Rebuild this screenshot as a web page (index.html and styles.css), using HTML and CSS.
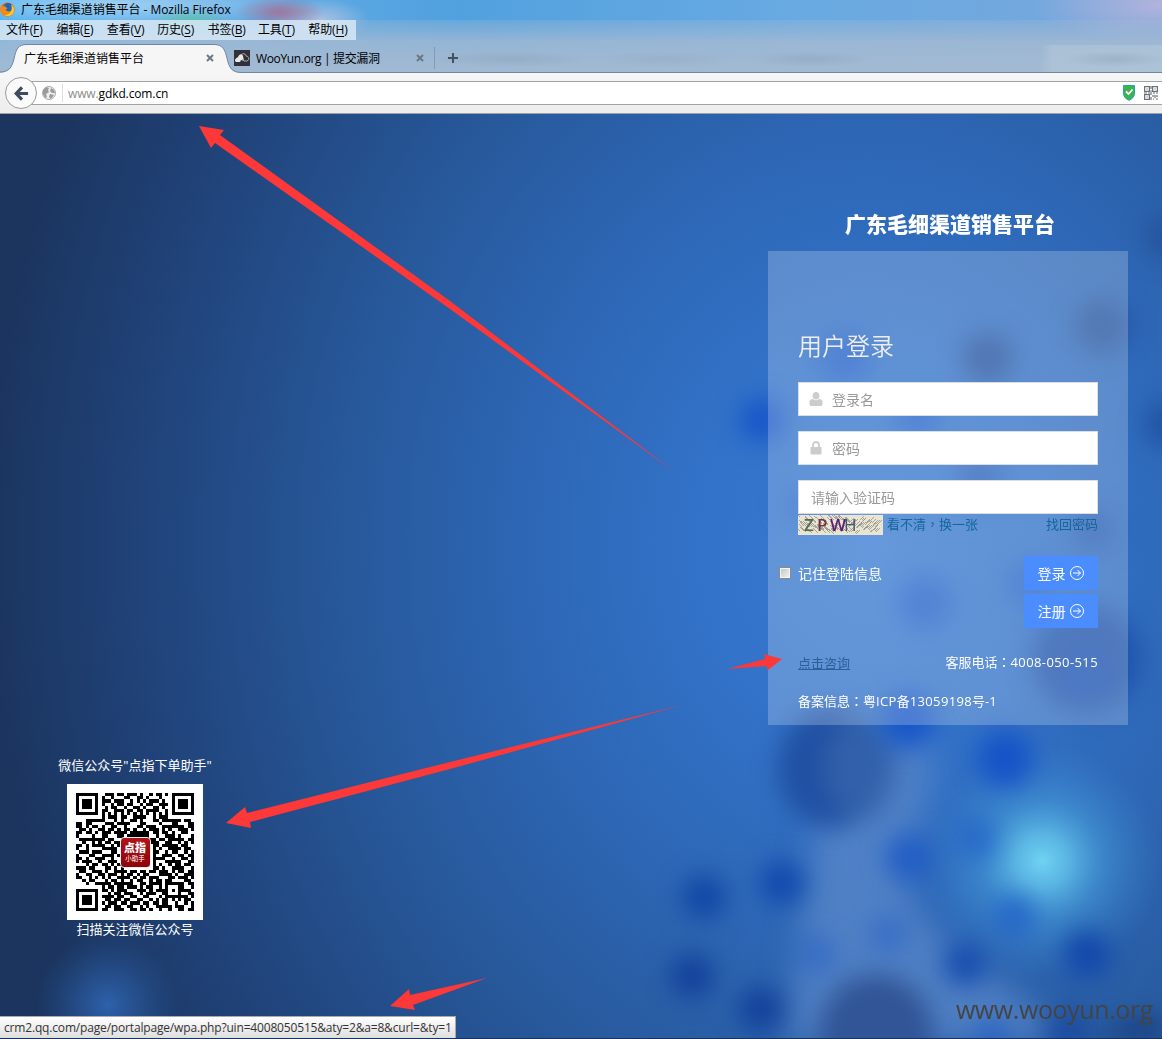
FILE: index.html
```html
<!DOCTYPE html>
<html lang="zh-CN">
<head>
<meta charset="utf-8">
<title>广东毛细渠道销售平台</title>
<link rel="stylesheet" href="styles.css">
</head>
<body>
<div class="window">
  <header class="chrome">
    <div class="titlebar">
      <svg class="fox" viewBox="0 0 16 16"><circle cx="8" cy="8" r="7.5" fill="#e66a12"/><circle cx="8.6" cy="6.2" r="5" fill="#2465b3"/><path d="M1 4C3 5 4 4 6 5L8 7L6 8C7 10 10 11 12 9C14 7 13 4 12 3C15 4 16 8 15 11C13 16 6 17 2 13C0 10 0 7 1 4Z" fill="#f08a1c"/><path d="M12 3C15 5 16 9 14 12C12 15 8 16 5 14C10 14 14 10 12 3Z" fill="#fbc82d"/></svg>
      <span class="wtitle">广东毛细渠道销售平台 - Mozilla Firefox</span>
    </div>
    <nav class="menubar">
      <span>文件(<u>F</u>)</span><span>编辑(<u>E</u>)</span><span>查看(<u>V</u>)</span><span>历史(<u>S</u>)</span><span>书签(<u>B</u>)</span><span>工具(<u>T</u>)</span><span>帮助(<u>H</u>)</span>
    </nav>
    <div class="tabs">
      <svg class="tabshape" viewBox="0 0 244 30"><path d="M0 29.5C10 29.5 12 24 14 16C16 6 18 1.5 27 1.5H214C223 1.5 225 7 227 15C229 24 231 29.500 240 29.500V30H0Z" fill="#f6f6f6"/><path d="M0 29C9 29 12 24 14 16C16 6 18 1.500 27 1.500H214C223 1.500 225 7 227 15C229 24 231 29.500 242 29.500" fill="none" stroke="#6d86a6"/></svg>
      <div class="tab tab-active"><span>广东毛细渠道销售平台</span><svg class="close" viewBox="0 0 8 8"><path d="M1 1L7 7M7 1L1 7"/></svg></div>
      <div class="tab tab-second">
        <svg class="favicon" viewBox="0 0 16 16"><rect width="16" height="16" fill="#30313b"/><path d="M1 11C1 8 3 8 4 7C5 4 8 3 9 6L10 11L7 10L6 12H2Z" fill="#e8e8e8"/><path d="M8 4C11 3 12 5 12 6C15 6 16 10 13 11H10L8 9" fill="none" stroke="#aaa"/></svg>
        <span class="tab-label">WooYun.org | 提交漏洞</span><svg class="close" viewBox="0 0 8 8"><path d="M1 1L7 7M7 1L1 7"/></svg>
      </div>
      <svg class="plus" viewBox="0 0 10 10"><path d="M5 0V10M0 5H10"/></svg>
    </div>
    <div class="navbar">
      <div class="back"><svg viewBox="0 0 16 16"><path d="M8.500 1.500L2.300 8L8.500 14.500M3 8H15" fill="none" stroke="#404c5c" stroke-width="3.400"/></svg></div>
      <div class="urlbar">
        <svg class="globe" viewBox="0 0 14 14"><circle cx="7" cy="7" r="6.500" fill="#ededed" stroke="#aaa"/><path d="M1 4L4 1L7 2L6 4L7 6L4 8L5 11L3 12L1 8ZM9 2L12 4L13 7L10 7L8 5ZM8 8L12 9L9 13L7 11Z" fill="#9b9b9b"/></svg>
        <span class="url"><i>www.</i>gdkd.com.cn</span>
        <svg class="shield" viewBox="0 0 14 16"><path d="M1.500 .500H12.500V8C12.500 12 10 14 7 15.300C4 14 1.500 12 1.500 8Z" fill="#3fb34b" stroke="#19a7c4"/><path d="M4 6.500L6.500 9L10.500 4.500" fill="none" stroke="#fff" stroke-width="1.800"/></svg>
        <svg class="qricon" viewBox="0 0 14 14" fill="none" stroke="#6b7079" stroke-width="1.200"><rect x=".6" y=".6" width="4.800" height="4.800"/><rect x="8.600" y=".6" width="4.800" height="4.800"/><rect x=".6" y="8.600" width="4.800" height="4.800"/><path d="M2.500 3H3.700M10.500 3H11.700M2.500 11H3.700M7 0V3M6 5H8M0 7H3M4 7H6M7 6V9M9 7H11M12 7H14M9 9V11M7 11V14M11 9V12M13 9V11M9 13H10M12 13H14"/></svg>
      </div>
    </div>
  </header>
  <main class="page">
    <svg class="backdrop" viewBox="0 0 1162 924" preserveAspectRatio="none" color-interpolation-filters="sRGB">
      <defs>
        <filter id="b16" x="-60%" y="-60%" width="220%" height="220%"><feGaussianBlur stdDeviation="16"/></filter>
        <filter id="b10" x="-60%" y="-60%" width="220%" height="220%"><feGaussianBlur stdDeviation="12"/></filter>
        <radialGradient id="cyan"><stop offset="0" stop-color="#70d3f3"/><stop offset=".22" stop-color="#62c2ea" stop-opacity=".85"/><stop offset=".5" stop-color="#4ba6df" stop-opacity=".5"/><stop offset="1" stop-color="#3b86d2" stop-opacity="0"/></radialGradient>
        <radialGradient id="left"><stop offset="0" stop-color="#2d62ac"/><stop offset=".45" stop-color="#2a5a9f" stop-opacity=".6"/><stop offset="1" stop-color="#24508f" stop-opacity="0"/></radialGradient>
      </defs>
      <g filter="url(#b16)"><path d="M915 615C955 650 915 700 905 760C915 830 1010 860 1070 930H785C800 830 805 760 820 690Z" fill="#5886c8" opacity=".8"/></g>
      <circle cx="108" cy="891" r="72" fill="url(#left)"/>
      <circle cx="1042" cy="747" r="120" fill="url(#cyan)"/>
      <g filter="url(#b10)">
        <ellipse cx="832" cy="654" rx="54" ry="60" fill="#2050a2"/>
        <ellipse cx="862" cy="654" rx="38" ry="52" fill="#3a66ae" opacity=".7"/>
        <circle cx="876" cy="918" r="57" fill="#315596"/>
        <circle cx="1086" cy="544" r="54" fill="#1c4da6" opacity=".8"/>
        <circle cx="988" cy="244" r="26" fill="#1f4a94" opacity=".8"/>
        <circle cx="1102" cy="212" r="27" fill="#1f4a92" opacity=".7"/>
        <circle cx="980" cy="366" r="22" fill="#1f50a8" opacity=".6"/>
        <circle cx="1094" cy="416" r="22" fill="#1f50a8" opacity=".6"/>
        <circle cx="1166" cy="123" r="20" fill="#224b91" opacity=".7"/>
        <circle cx="1166" cy="310" r="22" fill="#1e4d9e" opacity=".8"/>
        <path d="M1100 924Q1130 900 1162 906V924Z" fill="#173a79"/>
      </g>
      <g filter="url(#b10)" fill="#1553c8">
        <circle cx="1005" cy="645" r="28"/><circle cx="762" cy="306" r="22" opacity=".95"/>
        <circle cx="845" cy="244" r="25" opacity=".6"/><circle cx="918" cy="302" r="21" opacity=".6"/>
        <circle cx="925" cy="489" r="27" opacity=".6"/><circle cx="908" cy="606" r="27" opacity=".9"/>
        <circle cx="1030" cy="470" r="22" opacity=".5"/><circle cx="800" cy="392" r="18" opacity=".35"/>
        <circle cx="1086" cy="560" r="24" opacity=".35"/>
        <circle cx="782" cy="769" r="22" fill="#1149ae"/><circle cx="704" cy="783" r="22" fill="#1147a5"/>
        <circle cx="692" cy="862" r="22" fill="#12419b"/><circle cx="761" cy="895" r="22" fill="#12419b"/>
        <circle cx="908" cy="743" r="23" opacity=".7"/><circle cx="977" cy="725" r="21" opacity=".5"/>
        <circle cx="818" cy="840" r="18" opacity=".4"/><circle cx="888" cy="820" r="18" opacity=".4"/>
        <circle cx="965" cy="850" r="22" fill="#144aae" opacity=".9"/><circle cx="1087" cy="840" r="23" fill="#1247ab"/>
        <circle cx="1015" cy="801" r="21" opacity=".6"/><circle cx="1066" cy="918" r="22" fill="#17469d" opacity=".8"/><circle cx="992" cy="920" r="18" opacity=".5"/>
      </g>
    </svg>
    <section class="wechat">
      <p class="wx-top">微信公众号"点指下单助手"</p>
      <div class="qr">
        <svg id="qr" viewBox="0 0 37 37" shape-rendering="crispEdges"></svg>
        <div class="qrlogo"><b>点指</b><span>小助手</span></div>
      </div>
      <p class="wx-bottom">扫描关注微信公众号</p>
    </section>
    <section class="login">
      <h1>广东毛细渠道销售平台</h1>
      <form class="panel">
        <h2>用户登录</h2>
        <label class="field"><svg viewBox="0 0 14 14"><ellipse cx="7" cy="3.800" rx="3.400" ry="3.800"/><path d="M.5 12V10C.5 8 2 7 3.700 7Q7 9.600 10.300 7C12 7 13.500 8 13.500 10V12Q13.500 14 12 14H2Q.5 14 .5 12Z"/></svg><span>登录名</span></label>
        <label class="field"><svg viewBox="0 0 14 14"><path d="M2 6H12Q12.500 6 12.500 7V12.500Q12.500 13.500 12 13.500H2Q1.500 13.500 1.500 12.500V7Q1.500 6 2 6Z"/><path d="M4 7V4A3 3 0 0 1 10 4V7" fill="none" stroke="#ccc" stroke-width="1.800"/></svg><span>密码</span></label>
        <label class="field field-code"><span>请输入验证码</span></label>
        <div class="captcha-row">
          <svg class="captcha" viewBox="0 0 85 20"><rect width="85" height="20" fill="#e9e5d2"/><path id="noise" fill="none" stroke="#8e8c86" stroke-width=".7"/><g font-size="17" font-weight="600"><text x="6" y="16" fill="#4f6b50">Z</text><text x="19" y="16" fill="#6d3541">P</text><text x="32" y="16" fill="#5c1d70">W</text><text x="46" y="16" fill="#41566c" font-weight="400">H</text></g></svg>
          <a>看不清<i class="mid" lang="zh-TW">，</i>换一张</a><a class="forgot">找回密码</a>
        </div>
        <div class="actions">
          <label class="remember"><i class="box"></i>记住登陆信息</label>
          <div class="buttons">
            <button type="button">登录<svg viewBox="0 0 14 14"><circle cx="7" cy="7" r="6.500"/><path d="M3 7H10.500M7.500 4L10.500 7L7.500 10"/></svg></button>
            <button type="button">注册<svg viewBox="0 0 14 14"><circle cx="7" cy="7" r="6.500"/><path d="M3 7H10.500M7.500 4L10.500 7L7.500 10"/></svg></button>
          </div>
        </div>
        <div class="contact"><a>点击咨询</a><span>客服电话<i class="mid" lang="zh-TW">：</i><em>4008-050-515</em></span></div>
        <div class="icp">备案信息<i class="mid" lang="zh-TW">：</i>粤<em>ICP</em>备<em>13059198</em>号-1</div>
      </form>
    </section>
    <div class="status">crm2.qq.com/page/portalpage/wpa.php?uin=4008050515&amp;aty=2&amp;a=8&amp;curl=&amp;ty=1</div>
    <div class="watermark">www.wooyun.org</div>
  </main>
  <svg class="arrows" viewBox="0 0 1162 1039" fill="#fd3838">
    <path d="M199 126L224 130L220 135L450 301L676 473L450 309L215 143L211 148Z"/>
    <path d="M226 823L245 807L247 813L450 762L682 705L450 769L250 822L251 828Z"/>
    <path d="M390 1006L409 989L410 995L487 978L413 1005L415 1010Z"/>
    <path d="M782 659L764 654L765 659L727 669L766 666L768 670Z"/>
  </svg>
</div>
<script src="main.js"></script>
</body>
</html>
```

FILE: styles.css
```css
* { box-sizing: border-box; }
body { margin: 0; font-family: "Open Sans", "Noto Sans CJK SC", sans-serif; font-size: 12px; color: #000; }
p, h1, h2 { margin: 0; font-weight: 400; }
i, em { font-style: normal; }
svg { display: block; flex: none; }
.window { position: relative; width: 1162px; height: 1039px; overflow: hidden; display: flex; flex-direction: column; background: #14345f; }
/* Full-width punctuation centred in its cell */
.mid { font-family: "Noto Sans CJK TC", sans-serif; line-height: 1; }

.chrome {
  height: 114px; flex: none; display: flex; flex-direction: column;
  background:
    radial-gradient(ellipse 45px 16px at 280px 12px, rgba(170,105,140,.8), transparent),
    radial-gradient(ellipse 50px 22px at 320px 20px, rgba(190,200,225,.8), transparent),
    radial-gradient(ellipse 40px 14px at 190px 22px, rgba(80,195,150,.75), transparent),
    radial-gradient(ellipse 200px 22px at 110px 5px, rgba(175,215,245,.85), transparent),
    radial-gradient(ellipse 130px 40px at 1162px 5px, rgba(185,180,220,.9), transparent),
    linear-gradient(90deg, #49b0ee 0, #64ade5 200px, #51a1df 460px, #69aae2 800px, #78a7db 1162px);
}
.titlebar { height: 20px; display: flex; align-items: center; padding-bottom: 2px; }
.wtitle { letter-spacing: -.05px; }
.fox { width: 15px; height: 15px; margin-right: 6px; }
.menubar { height: 20px; display: flex; gap: 13px; padding-left: 6px; line-height: 19px; white-space: nowrap;
  background: linear-gradient(rgba(225,238,249,.75), rgba(225,238,249,.75)) 0 0 / 356px 20px no-repeat, linear-gradient(rgba(165,186,210,.25), rgba(165,186,210,.75)); }
.menubar span { width: 37.400px; letter-spacing: -.15px; }
.menubar u { text-underline-offset: 2px; }
.tabs { position: relative; height: 33px; padding-top: 3px; display: flex; align-items: center; border-bottom: 1px solid #6d86a6;
  background:
    radial-gradient(ellipse 80px 8px at 510px 19px, rgba(130,150,172,.3), transparent),
    radial-gradient(ellipse 70px 8px at 665px 19px, rgba(140,158,180,.25), transparent),
    radial-gradient(ellipse 60px 8px at 810px 19px, rgba(130,150,172,.3), transparent),
    radial-gradient(ellipse 50px 8px at 1115px 19px, rgba(120,150,172,.3), transparent),
    linear-gradient(90deg, transparent, rgba(178,200,216,.6) 10%) 1040px 5px / 122px 28px no-repeat,
    linear-gradient(rgba(165,186,210,.8), rgba(165,186,210,.97)); }
.tabshape { position: absolute; left: 0; top: 3px; width: 244px; height: 30px; }
.tab { position: relative; display: flex; align-items: center; justify-content: space-between; height: 30px; }
.tab-active { width: 234px; padding: 1px 20px 0 24px; }
.tab-second { width: 201px; padding-right: 10px; border-right: 1px solid #8499b3; height: 22px; }
.favicon { width: 16px; height: 16px; margin-right: 6px; }
.tab-label { flex: 1; letter-spacing: -.35px; padding-top: 1px; }
.close { width: 8px; height: 8px; fill: none; stroke: #6d7784; stroke-width: 2; }
.plus { width: 10px; height: 10px; margin-left: 13px; stroke: #46505e; stroke-width: 2; }
.navbar { height: 41px; background: linear-gradient(#f6f6f6, #ededed); border-bottom: 1px solid #9ca1a7; display: flex; align-items: center; padding-left: 5px; }
.back { width: 32px; height: 32px; border: 1px solid #999; border-radius: 50%; background: #fafafa; display: flex; align-items: center; justify-content: center; z-index: 1; }
.back svg { width: 15px; height: 15px; }
.urlbar { flex: 1; height: 24px; margin-left: -6px; padding: 0 4px 0 11px; display: flex; align-items: center; background: #fff; border: solid #a3a3a3; border-width: 1px 0; }
.globe { width: 14px; height: 14px; margin-right: 6px; }
.url { flex: 1; border-left: 1px solid #ddd; padding: 2px 0 0 5px; line-height: 16px; letter-spacing: -.12px; }
.url i { color: #8c8c8c; }
.shield { width: 14px; height: 16px; margin-right: 8px; }
.qricon { width: 14px; height: 14px; }

.page { position: relative; height: 924px; display: flex; justify-content: space-between; padding: 0 34px 0 35px; color: #fff; font-size: 13px;
  background: radial-gradient(ellipse 880px 1030px at 870px 430px, #3a7cd2 0, #3272c8 20%, #2d66b4 40%, #27589a 60%, #204278 84%, #1b355f 100%); }
.backdrop { position: absolute; inset: 0; width: 1162px; height: 924px; }
.wechat { position: relative; width: 200px; padding-top: 641px; display: flex; flex-direction: column; align-items: center; white-space: nowrap; }
.wx-top { line-height: 20px; height: 29px; }
.wx-bottom { line-height: 18px; }
.qr { width: 136px; height: 136px; background: #fff; display: grid; place-items: center; }
.qr > * { grid-area: 1 / 1; }
.qr > svg { width: 118px; height: 118px; fill: #000; }
.qrlogo { position: relative; width: 31px; height: 31px; border: 1.500px solid #eee; border-radius: 4px; background: linear-gradient(#b11318, #8d0207); display: flex; flex-direction: column; align-items: center; justify-content: center; }
.qrlogo b { font-size: 11px; line-height: 13px; font-weight: 900; }
.qrlogo span { font-size: 6.500px; line-height: 9px; }

.login { position: relative; width: 360px; padding-top: 94px; }
h1 { font-size: 21px; font-weight: 900; line-height: 32px; height: 43px; padding-left: 4px; text-align: center; white-space: nowrap; }
.panel { height: 474px; padding: 80px 30px 0; background: rgba(255,255,255,.22); }
h2 { font-size: 24px; line-height: 30px; height: 51px; color: #eee; font-weight: 350; }
.field { display: flex; align-items: center; height: 34px; margin-bottom: 15px; padding-left: 10px; background: #fff; border: 1px solid #ddd; color: #999; font-size: 14px; }
.field svg { width: 14px; height: 14px; margin-right: 9px; fill: #ccc; }
.field-code { margin-bottom: 1px; padding-left: 12px; }
.captcha-row { display: flex; height: 20px; line-height: 18px; color: #13679a; white-space: nowrap; }
.captcha { width: 85px; height: 20px; margin-right: 4px; overflow: visible; }
.forgot { margin-left: auto; }
.actions { display: flex; justify-content: space-between; margin: 21px 0 24px -19px; }
.remember { display: flex; align-items: center; height: 34px; font-size: 14px; }
.box { width: 12px; height: 12px; margin-right: 7px; border: 1px solid #8b8b82; background: linear-gradient(135deg, #bfc3c8, #f4f4f4); box-shadow: inset 0 0 0 1px #f4f4f4; }
.buttons { display: flex; flex-direction: column; gap: 4px; }
button { width: 74px; height: 34px; padding: 0 1px 0 0; border: 0; background: #4b8dff; color: #fff; font: inherit; font-size: 14px; display: flex; align-items: center; justify-content: center; gap: 4px; }
button svg { width: 14px; height: 14px; fill: none; stroke: #fff; }
.contact { display: flex; justify-content: space-between; line-height: 20px; height: 39px; white-space: nowrap; }
.contact a { color: #2a6196; text-decoration: underline; padding-top: 1px; }
.contact em { letter-spacing: .4px; }
.icp { line-height: 20px; white-space: nowrap; }
.icp em { letter-spacing: .35px; }
.status { position: absolute; left: 0; bottom: 0; width: 456px; height: 22px; padding-left: 4px; line-height: 21px; font-size: 12px; letter-spacing: -.17px; white-space: nowrap; color: #333; background: linear-gradient(#fff, #dedede); border: solid #aaa; border-width: 1px 1px 0 0; }
.watermark { position: absolute; right: 9px; bottom: 12px; color: #444; font-size: 25px; letter-spacing: -.4px; line-height: 34px; }
.arrows { position: absolute; inset: 0; width: 1162px; height: 1039px; pointer-events: none; }
```

FILE: main.js
```js
const rows = [
  "1111111001110110111010010110101111111",
  "1000001010010001100110100010001000001",
  "1011101011101110010101011101001011101",
  "1011101010010110110010110011101011101",
  "1011101001011001001101001101001011101",
  "1000001011001110110110111100101000001",
  "1111111010101010101010101010101111111",
  "0000000010111011001111001011100000000",
  "0001111110001010011010001101111110110",
  "1101100001110111100011000010001100011",
  "1101011010011001000110111001111111011",
  "0110100110110101101001011101010011101",
  "1101101011101111011111101101101001100",
  "1000010011000110111111100100111010001",
  "0111111110110011111110111011011111011",
  "0010010101101100111111011100110010101",
  "1101011110010110000000001101111101100",
  "1001000011111010000000001010011110110",
  "0111011100011000000000001100101100101",
  "1000110011110110000000001001110011011",
  "1101001110010010000000001111001001101",
  "1011100100111010000000001000111110011",
  "0001011011010110000000001010010110110",
  "1110110001101010000000001101001111001",
  "0110011101001111011011011011101011011",
  "1001100110111010110101100011110100111",
  "1100101010100111101011011100011011101",
  "0010110001011010010110010110110000110",
  "0001001111101111110011011110111111011",
  "0000000010110110111010110010100011001",
  "1111111011010111000111010111101011110",
  "1000001000101101110010111001100010011",
  "1011101011110110011001100010111111101",
  "1011101001101101100110010101101010110",
  "1011101010111011011101101101100100101",
  "1000001001101100110010100111110111001",
  "1111111011001110011011010010010011011"
];
const ns = "http://www.w3.org/2000/svg";
const modules = document.createElementNS(ns, "path");
modules.setAttribute("d", rows.map((row, y) => [...row].map((c, x) => c === "1" ? `M${x} ${y}h1v1h-1z` : "").join("")).join(""));
document.getElementById("qr").append(modules);

// Scratch lines across the captcha
let lines = "";
for (let i = 0; i < 140; i++) {
  const x = (i * 37) % 80, y = (i * 7 + (i * i) % 11) % 15;
  lines += `M${x} ${x > 50 ? y + 5 : y}l${2 + i % 4} ${(x > 50 ? -1 : 1) * (2 + i % 4)}`;
}
document.getElementById("noise").setAttribute("d", lines);
```
